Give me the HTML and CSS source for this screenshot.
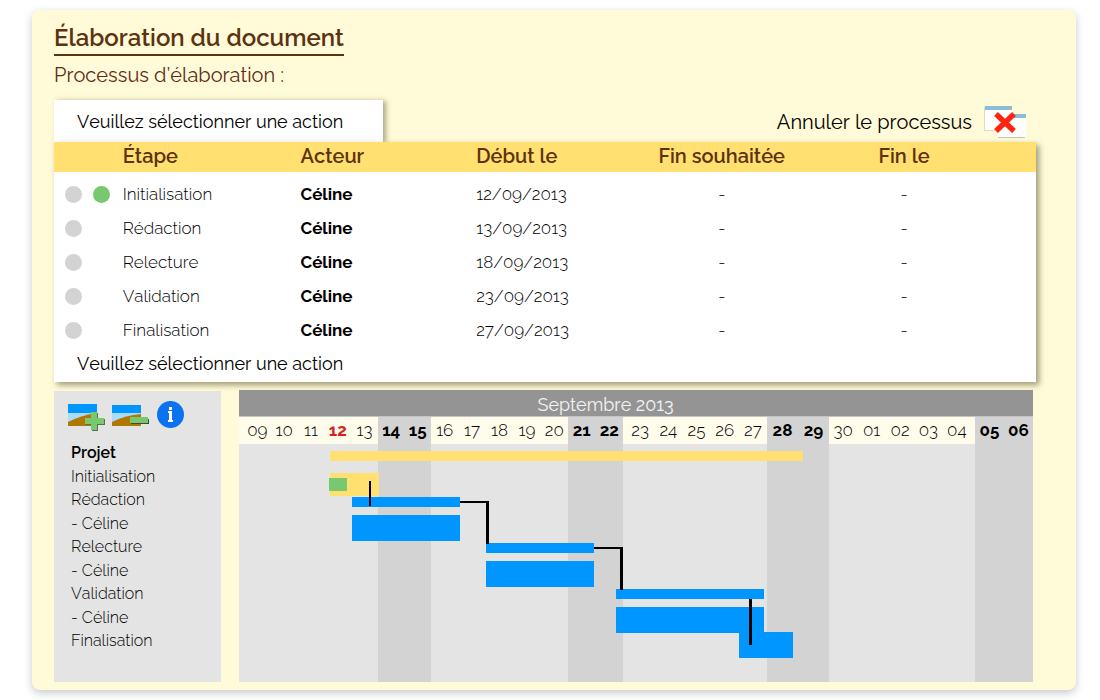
FILE: index.html
```html
<!DOCTYPE html>
<html lang="fr">
<head>
<meta charset="utf-8">
<title>Élaboration du document</title>
<link rel="stylesheet" href="styles.css">
</head>
<body>
<main class="panel">
  <h1 class="title">Élaboration du document</h1>
  <h2 class="subtitle">Processus d’élaboration :</h2>

  <section class="process">
    <div class="toolbar">
      <select class="action action-tab" aria-label="Action sur la sélection">
        <option>Veuillez sélectionner une action</option>
      </select>
      <button class="cancel" type="button">
        Annuler le processus
        <svg class="cancel-icon" viewBox="0 0 42 33" aria-hidden="true">
          <path d="M0 1h28v24H0z" fill="#dcdcc8"/>
          <path d="M1 1h27v23H1z" fill="#fff"/>
          <path d="M1 0h27v4H1z" fill="#8bbdd9"/>
          <path d="M14 8h28v24H14z" fill="#fff"/>
          <path d="M14 31h27v1H14z" fill="#c4c4bc"/>
          <path d="M28 8h14v4H28z" fill="#8bbdd9"/>
          <path d="M12 8l18 17M30 8L12 25" stroke="#ff2412" stroke-width="5.5"/>
        </svg>
      </button>
    </div>

    <div class="sheet">
      <table class="steps">
        <colgroup>
          <col class="c-status"><col class="c-step"><col class="c-actor"><col class="c-start"><col class="c-wish"><col class="c-end">
        </colgroup>
        <thead>
          <tr><th></th><th>Étape</th><th class="actor">Acteur</th><th>Début le</th><th class="mid">Fin souhaitée</th><th class="mid last">Fin le</th></tr>
        </thead>
        <tbody>
          <tr><td><span class="dots"><i class="dot"></i><i class="dot on"></i></span></td><td>Initialisation</td><td class="actor">Céline</td><td>12/09/2013</td><td class="mid">-</td><td class="mid last">-</td></tr>
          <tr><td><span class="dots"><i class="dot"></i></span></td><td>Rédaction</td><td class="actor">Céline</td><td>13/09/2013</td><td class="mid">-</td><td class="mid last">-</td></tr>
          <tr><td><span class="dots"><i class="dot"></i></span></td><td>Relecture</td><td class="actor">Céline</td><td>18/09/2013</td><td class="mid">-</td><td class="mid last">-</td></tr>
          <tr><td><span class="dots"><i class="dot"></i></span></td><td>Validation</td><td class="actor">Céline</td><td>23/09/2013</td><td class="mid">-</td><td class="mid last">-</td></tr>
          <tr><td><span class="dots"><i class="dot"></i></span></td><td>Finalisation</td><td class="actor">Céline</td><td>27/09/2013</td><td class="mid">-</td><td class="mid last">-</td></tr>
        </tbody>
      </table>
      <select class="action action-foot" aria-label="Action sur le processus">
        <option>Veuillez sélectionner une action</option>
      </select>
    </div>
  </section>

  <section class="planning">
    <aside class="side">
      <div class="tools">
        <button class="tool" type="button" aria-label="Agrandir">
          <svg width="38" height="30" viewBox="0 0 38 30">
            <path d="M0 3h29v9H0z" fill="#0096ff"/><path d="M0 12h29v12H0z" fill="#a9dcf8"/>
            <path d="M0 21Q14 14 29 12V25H0z" fill="#b07800"/>
            <path d="M24 12h6v6h7v6h-7v6h-6v-6h-6v-6h6z" fill="#55704c"/>
            <path d="M23 11h6v6h7v6h-7v6h-6v-6h-6v-6h6z" fill="#78c870"/>
          </svg>
        </button>
        <button class="tool" type="button" aria-label="Réduire">
          <svg width="38" height="30" viewBox="0 0 38 30">
            <path d="M0 4h29v8H0z" fill="#0096ff"/><path d="M0 12h29v13H0z" fill="#a9dcf8"/>
            <path d="M0 21Q14 14 29 13V25H0z" fill="#b07800"/>
            <path d="M19 18h18v5H19z" fill="#3f4a30"/><path d="M18 16h18v6H18z" fill="#78c870"/>
          </svg>
        </button>
        <button class="tool" type="button" aria-label="Informations">
          <svg width="28" height="28" viewBox="0 0 28 28">
            <circle cx="14.5" cy="13.5" r="13.5" fill="#0b72f0"/>
            <path d="M13 6h3v3h-3zM12 10h4v9h1v2h-5v-2h1v-7h-1z" fill="#fff"/>
          </svg>
        </button>
      </div>
      <ul class="tasks">
        <li class="root">Projet</li><li>Initialisation</li><li>Rédaction</li><li>- Céline</li><li>Relecture</li><li>- Céline</li><li>Validation</li><li>- Céline</li><li>Finalisation</li>
      </ul>
    </aside>

    <div class="gantt">
      <div class="month">Septembre 2013</div>
      <div class="calendar">
        <div class="span lead"><div class="days"><span>09</span><span>10</span><span>11</span><span class="today">12</span><span>13</span></div></div>
        <div class="span off"><div class="days"><span>14</span><span>15</span></div></div>
        <div class="span"><div class="days"><span>16</span><span>17</span><span>18</span><span>19</span><span>20</span></div></div>
        <div class="span off"><div class="days"><span>21</span><span>22</span></div></div>
        <div class="span inner"><div class="days"><span>23</span><span>24</span><span>25</span><span>26</span><span>27</span></div></div>
        <div class="span off"><div class="days"><span>28</span><span>29</span></div></div>
        <div class="span tail"><div class="days"><span>30</span><span>01</span><span>02</span><span>03</span><span>04</span></div></div>
        <div class="span off"><div class="days"><span>05</span><span>06</span></div></div>
        <svg class="bars" viewBox="0 0 794 238" preserveAspectRatio="none" aria-hidden="true">
          <g fill="#ffe070"><path d="M91 7h473v10H91zM91 29h49v23H91z"/></g>
          <path d="M90 34h18v13H90z" fill="#78c870"/>
          <g fill="#0096ff">
            <path d="M113 53h108v10H113zM113 71h108v26H113z"/>
            <path d="M247 99h108v10H247zM247 117h108v26H247z"/>
            <path d="M377 145h148v10H377zM377 163h148v26H377zM500 188h54v26H500z"/>
          </g>
          <g fill="#000">
            <path d="M130 37h2v25h-2zM510 155h3v46h-3z"/>
            <path d="M221 57h29v43h-3V59h-26zM355 103h29v43h-3v-41h-26z"/>
          </g>
        </svg>
      </div>
    </div>
  </section>
</main>
</body>
</html>
```
FILE: styles.css
```css
* { box-sizing: border-box; }
body {
  margin: 0;
  padding: 10px 24px 10px 32px;
  background: #fff;
  color: #000;
  font-family: Raleway, "Open Sans", "Noto Sans", sans-serif;
  font-variant-numeric: oldstyle-nums;
  font-kerning: none;
  font-size: 17px;
}
button, select { font: inherit; font-kerning: none; color: inherit; background: none; border: 0; padding: 0; }
.panel {
  padding: 12px 40px 8px 22px;
  background: #fffad8;
  border-radius: 8px;
  box-shadow: 0 3px 8px rgba(60, 80, 90, .3);
}
.title {
  width: fit-content;
  margin: 0;
  border-bottom: 2px solid #5c3310;
  color: #5c3310;
  font-size: 24px;
  font-weight: 600;
  line-height: 32px;
}
.subtitle {
  margin: 4px 0 10px;
  color: #5e2a18;
  font-size: 20px;
  font-weight: 400;
  line-height: 30px;
}
.toolbar { display: flex; justify-content: space-between; height: 42px; }
.action { appearance: none; padding-left: 23px; font-size: 18px; }
.action-tab {
  width: 329px;
  height: 42px;
  background: #fff;
  box-shadow: 3px 1px 5px rgba(90, 90, 50, .5);
}
.cancel { display: flex; align-items: center; gap: 12px; padding: 2px 10px 0 0; font-size: 20px; }
.cancel-icon { width: 42px; height: 33px; }
.sheet {
  position: relative;
  background: #fff;
  box-shadow: 3px 3px 6px rgba(90, 90, 50, .6);
}
.steps { width: 100%; border-collapse: collapse; table-layout: fixed; }
.c-status { width: 7%; }
.c-step { width: 18%; }
.c-actor { width: 18%; }
.c-start { width: 16%; }
.c-wish { width: 18%; }
.c-end { width: 23%; }
.steps th {
  height: 30px;
  padding: 0 0 2px;
  background: #ffe070;
  color: #5c3310;
  font-size: 20px;
  font-weight: 600;
  line-height: 28px;
  text-align: left;
}
.steps td { height: 34px; padding: 0; font-weight: 300; line-height: 24px; }
.steps tbody tr:first-child td { height: 39px; padding-top: 5px; }
.steps .actor { padding-left: 1px; }
.steps td.actor { font-weight: 700; line-height: 26px; }
.steps .mid { text-align: center; }
.steps .last { padding-right: 38px; }
.dots { display: flex; gap: 11px; padding-left: 11px; }
.dot { width: 17px; height: 17px; border-radius: 50%; background: #d3d3d3; }
.dot.on { background: #78c870; }
.action-foot { display: block; height: 35px; padding-bottom: 2px; }
.planning {
  display: grid;
  grid-template-columns: 167px 1fr;
  gap: 18px;
  padding: 8px 3px 0 0;
}
.side { margin-top: 1px; padding: 10px 14px 0; background: #e4e4e4; }
.tools { display: flex; gap: 6px; height: 40px; }
.tool { display: block; height: 30px; }
.tool svg { display: block; }
.tool:last-child { height: 28px; }
.tasks {
  display: grid;
  grid-auto-rows: 1fr;
  height: 212px;
  margin: 0;
  padding: 0 0 0 3px;
  list-style: none;
  font-size: 16px;
  font-weight: 300;
  line-height: 23px;
}
.tasks .root { font-weight: 600; }
.month {
  height: 27px;
  background: #949494;
  border-bottom: 1px solid #c4c4c4;
  color: #f4f4f4;
  font-size: 18px;
  line-height: 30px;
  text-align: center;
  padding-right: 61px;
}
.calendar {
  position: relative;
  display: grid;
  grid-template-columns: 139fr 53fr 137fr 55fr 144fr 62fr 146fr 58fr;
  height: 265px;
  background: #e4e4e4;
}
.days {
  display: flex;
  height: 27px;
  background: #fffcec;
  font-size: 17px;
  font-weight: 300;
  line-height: 26px;
}
.days span { flex: 1 1 0; min-width: 0; text-align: center; }
.days .today { color: #d71f1f; font-weight: 700; }
.lead .days { padding-left: 5px; }
.inner .days { padding-left: 3px; }
.tail .days { padding-right: 4px; }
.off { background: #d3d3d3; }
.off .days { background: none; font-weight: 700; }
.bars { position: absolute; left: 0; top: 27px; width: 100%; height: 238px; }
```
